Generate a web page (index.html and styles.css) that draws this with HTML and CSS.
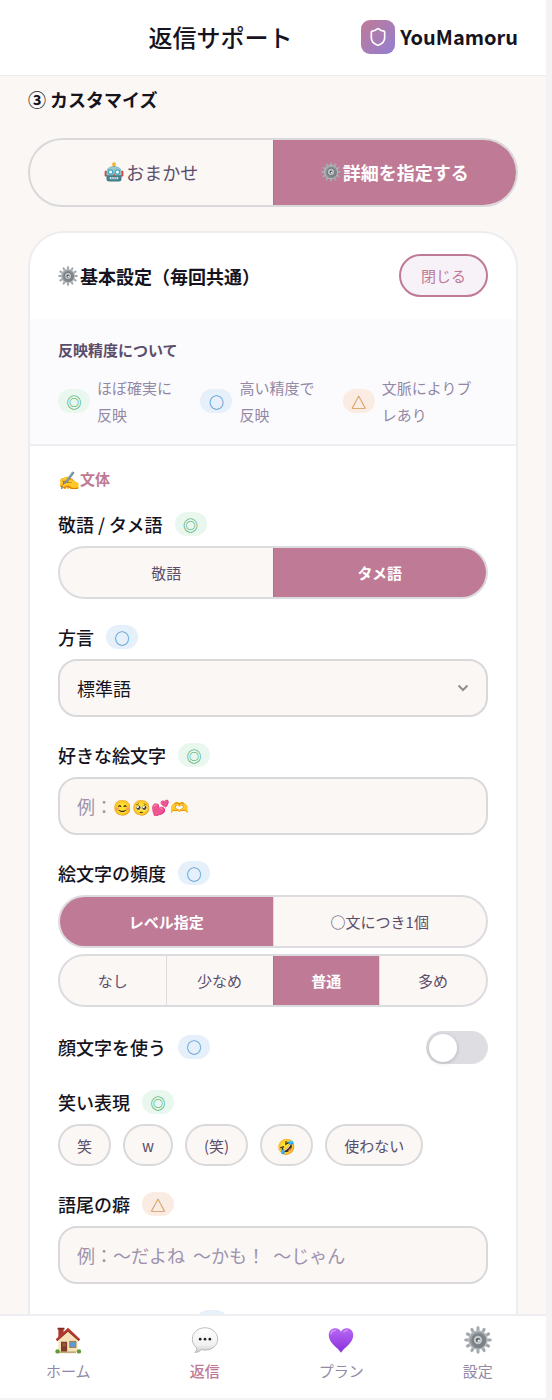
FILE: index.html
```html
<!DOCTYPE html>
<html lang="ja">
<head>
    <meta charset="UTF-8">
    <meta name="viewport" content="width=device-width, initial-scale=1.0">
    <title>返信サポート | YouMamoru</title>
    <link rel="stylesheet" href="styles.css">
</head>
<body>
    <!-- shared icons -->
    <svg class="icon-defs" aria-hidden="true">
        <defs>
            <linearGradient id="steel" x1="0" y1="0" x2="1" y2="1">
                <stop offset="0" stop-color="#a9afb3"/>
                <stop offset="1" stop-color="#6f7479"/>
            </linearGradient>
            <linearGradient id="purple" x1="0" y1="0" x2="0" y2="1">
                <stop offset="0" stop-color="#b768f2"/>
                <stop offset="1" stop-color="#8a2fdc"/>
            </linearGradient>
            <linearGradient id="bubble" x1="0" y1="0" x2="0" y2="1">
                <stop offset="0" stop-color="#ffffff"/>
                <stop offset="0.7" stop-color="#f1f1f1"/>
                <stop offset="1" stop-color="#c9c9c9"/>
            </linearGradient>
            <symbol id="icon-gear" viewBox="0 0 32 32">
                <g stroke="#a3a8ac" stroke-width="3.4" stroke-linecap="round">
                    <path d="M16 2v28M2 16h28"/>
                    <path d="M16 2v28M2 16h28" transform="rotate(30 16 16)"/>
                    <path d="M16 2v28M2 16h28" transform="rotate(60 16 16)"/>
                </g>
                <circle cx="16" cy="16" r="10.500" fill="url(#steel)" stroke="#b9bec1" stroke-width="1.500"/>
                <circle cx="16" cy="16" r="7.500" fill="#7c8186"/>
                <circle cx="16" cy="16" r="4.800" fill="#c3c8cb"/>
                <circle cx="16" cy="16" r="2.400" fill="#4c4f53"/>
                <circle cx="16.800" cy="16.800" r="1.300" fill="#fff"/>
            </symbol>
            <symbol id="icon-robot" viewBox="0 0 32 32">
                <rect x="14.500" y="3" width="3" height="5" fill="#8d6a5c"/>
                <circle cx="16" cy="3.500" r="3" fill="#f3b632"/>
                <rect x="1" y="14" width="4" height="9" rx="1.500" fill="#d8453a"/>
                <rect x="27" y="14" width="4" height="9" rx="1.500" fill="#d8453a"/>
                <path d="M4 17C4 10 9 7 16 7s12 3 12 10v10c0 3-2 4-4 4H8c-2 0-4-1-4-4z" fill="#3f7f8c"/>
                <path d="M4 17C4 10 9 7 16 7s12 3 12 10v4H4z" fill="#9cc7cb"/>
                <circle cx="10.500" cy="16" r="4.500" fill="#3fa9c4"/>
                <circle cx="21.500" cy="16" r="4.500" fill="#3fa9c4"/>
                <circle cx="10.500" cy="16" r="2.400" fill="#fff"/>
                <circle cx="21.500" cy="16" r="2.400" fill="#fff"/>
                <path d="M16 18l2 4h-4z" fill="#d8453a"/>
                <rect x="9" y="24" width="14" height="3.500" rx="1" fill="#d9e3e4"/>
                <path d="M12.500 24v3.500M16 24v3.500M19.500 24v3.500" stroke="#37565e"/>
            </symbol>
            <symbol id="icon-house" viewBox="0 0 32 32">
                <path d="M5 3h6v10H5z" fill="#a8382c"/>
                <path d="M4 2h8v2H4z" fill="#7e2a22"/>
                <path d="M5 14 16 4l11 10v16H5z" fill="#f5e2b8"/>
                <path d="M16 2 2 15l1.500 2L16 6l12.500 11 1.500-2z" fill="#b9372d"/>
                <path d="M3.500 17 16 6l12.500 11" fill="none" stroke="#7e2a22"/>
                <rect x="8" y="18" width="7" height="12" fill="#7a3f26"/>
                <rect x="9.500" y="19.500" width="4" height="4" fill="#9b5a38"/>
                <rect x="18" y="17.500" width="7" height="7" fill="#5c9ad0" stroke="#a8763f"/>
                <path d="M6 30h19" stroke="#c2a878" stroke-width="2"/>
                <circle cx="4" cy="29" r="2.500" fill="#5f9a35"/>
                <circle cx="28.500" cy="29" r="2.500" fill="#5f9a35"/>
            </symbol>
            <symbol id="icon-bubble" viewBox="0 0 32 32">
                <path d="M16 2C8 2 1.500 7.500 1.500 15c0 4.500 2 7.500 5 9.800.2 2.200-.5 3.800-2 5.400 3 0 5.500-1.200 7.500-3.200 1.300.3 2.600.5 4 .5 8 0 14.500-5 14.500-12.500S24 2 16 2z" fill="url(#bubble)" stroke="#b4b4b4"/>
                <circle cx="10.500" cy="15" r="1.500" fill="#222"/>
                <circle cx="16" cy="15" r="1.500" fill="#222"/>
                <circle cx="21.500" cy="15" r="1.500" fill="#222"/>
            </symbol>
            <symbol id="icon-heart" viewBox="0 0 32 32">
                <path d="M16 30.500C13 25 2 19.500 2 10.500 2 5.500 5.500 2.500 9.500 2.500c3 0 5.300 1.500 6.500 4.200 1.200-2.700 3.500-4.200 6.500-4.200 4 0 7.500 3 7.500 8C30 19.500 19 25 16 30.500z" fill="url(#purple)"/>
                <path d="M4.500 9c.5-2.500 2.500-4 5-4M19.500 6.500c1-1 2-1.500 3.500-1.500" fill="none" stroke="#d09bf7" stroke-width="1.500" stroke-linecap="round"/>
            </symbol>
        </defs>
    </svg>

    <div class="app">
        <header class="header">
            <span class="header-spacer"></span>
            <h1>返信サポート</h1>
            <a href="#" class="brand">
                <span class="brand-icon">
                    <svg viewBox="0 0 24 24" width="20" height="20" fill="none" stroke="#fff" stroke-width="2" stroke-linecap="round" stroke-linejoin="round">
                        <path d="M20 13c0 5-3.5 7.5-7.66 8.95a1 1 0 0 1-.67-.01C7.5 20.5 4 18 4 13V6a1 1 0 0 1 1-1c2 0 4.5-1.2 6.24-2.72a1.17 1.17 0 0 1 1.52 0C14.51 3.81 17 5 19 5a1 1 0 0 1 1 1z"/>
                    </svg>
                </span>
                YouMamoru
            </a>
        </header>

        <main class="content">
            <h2 class="step-title">③ カスタマイズ</h2>

            <div class="segment segment-large">
                <button type="button"><svg class="emoji-icon"><use href="#icon-robot"/></svg>おまかせ</button>
                <button type="button" class="active"><svg class="emoji-icon"><use href="#icon-gear"/></svg>詳細を指定する</button>
            </div>

            <section class="card">
                <div class="card-head">
                    <h3><svg class="emoji-icon"><use href="#icon-gear"/></svg>基本設定（毎回共通）</h3>
                    <button type="button" class="close-btn">閉じる</button>
                </div>

                <div class="legend">
                    <h4>反映精度について</h4>
                    <ul>
                        <li><span class="badge badge-high">◎</span><span>ほぼ確実に反映</span></li>
                        <li><span class="badge badge-mid">○</span><span>高い精度で反映</span></li>
                        <li><span class="badge badge-low">△</span><span>文脈によりブレあり</span></li>
                    </ul>
                </div>

                <form class="settings">
                    <h4><span class="emoji">✍️</span>文体</h4>

                    <div class="field">
                        <div class="field-label">敬語 / タメ語 <span class="badge badge-high">◎</span></div>
                        <div class="segment">
                            <button type="button">敬語</button>
                            <button type="button" class="active">タメ語</button>
                        </div>
                    </div>

                    <div class="field">
                        <label class="field-label" for="dialect">方言 <span class="badge badge-mid">○</span></label>
                        <div class="control">
                            <select id="dialect">
                                <option>標準語</option>
                                <option>関西弁</option>
                                <option>博多弁</option>
                            </select>
                            <svg class="chevron" viewBox="0 0 12 12" width="12" height="12" fill="none" stroke="#8e8e93" stroke-width="2"><path d="M1.500 3.500 6 8l4.500-4.500"/></svg>
                        </div>
                    </div>

                    <div class="field">
                        <label class="field-label" for="emojis">好きな絵文字 <span class="badge badge-high">◎</span></label>
                        <div class="control">
                            <input type="text" id="emojis" placeholder=" ">
                            <span class="hint">例：<span class="hint-emoji">😊🥺💕🫶</span></span>
                        </div>
                    </div>

                    <div class="field">
                        <div class="field-label">絵文字の頻度 <span class="badge badge-mid">○</span></div>
                        <div class="segment">
                            <button type="button" class="active">レベル指定</button>
                            <button type="button">○文につき1個</button>
                        </div>
                        <div class="segment">
                            <button type="button">なし</button>
                            <button type="button">少なめ</button>
                            <button type="button" class="active">普通</button>
                            <button type="button">多め</button>
                        </div>
                    </div>

                    <div class="field field-row">
                        <label class="field-label" for="kaomoji">顔文字を使う <span class="badge badge-mid">○</span></label>
                        <input type="checkbox" id="kaomoji" class="toggle">
                    </div>

                    <div class="field">
                        <div class="field-label">笑い表現 <span class="badge badge-high">◎</span></div>
                        <div class="chips">
                            <button type="button">笑</button>
                            <button type="button">w</button>
                            <button type="button">(笑)</button>
                            <button type="button" class="chip-emoji">🤣</button>
                            <button type="button">使わない</button>
                        </div>
                    </div>

                    <div class="field">
                        <label class="field-label" for="ending">語尾の癖 <span class="badge badge-low">△</span></label>
                        <input type="text" id="ending" placeholder="例：〜だよね  〜かも！  〜じゃん">
                    </div>

                    <div class="field">
                        <label class="field-label" for="first-person">一人称・呼び方 <span class="badge badge-mid">○</span></label>
                        <input type="text" id="first-person">
                    </div>
                </form>
            </section>
        </main>

        <nav class="tabbar">
            <a href="#"><svg class="tab-icon"><use href="#icon-house"/></svg>ホーム</a>
            <a href="#" class="active"><svg class="tab-icon"><use href="#icon-bubble"/></svg>返信</a>
            <a href="#"><svg class="tab-icon"><use href="#icon-heart"/></svg>プラン</a>
            <a href="#"><svg class="tab-icon"><use href="#icon-gear"/></svg>設定</a>
        </nav>
    </div>
</body>
</html>
```
FILE: styles.css
```css
* {
    box-sizing: border-box;
    margin: 0;
    padding: 0;
}

body {
    font-family: 'Noto Sans CJK JP', sans-serif;
    background: #f5f2f3;
    color: #15131d;
    padding: 0 6px 2px 0;
}

button, input, select {
    font-family: inherit;
    color: inherit;
}

button {
    cursor: pointer;
}

a {
    color: inherit;
    text-decoration: none;
}

.icon-defs {
    position: absolute;
    width: 0;
    height: 0;
}

.app {
    display: flex;
    flex-direction: column;
    height: calc(100vh - 2px);
    background: #fbf7f4;
}

/* header */
.header {
    display: flex;
    justify-content: space-between;
    align-items: center;
    flex-shrink: 0;
    height: 76px;
    padding: 0 28px 2px;
    background: #fff;
    border-bottom: 1px solid #ececf0;
}

.header-spacer {
    width: 52px;
}

.header h1 {
    font-size: 24px;
    font-weight: 500;
}

.brand {
    display: flex;
    align-items: center;
    gap: 5px;
    font-size: 20px;
    font-weight: 700;
}

.brand-icon {
    display: flex;
    align-items: center;
    justify-content: center;
    width: 34px;
    height: 34px;
    border-radius: 9px;
    background: linear-gradient(135deg, #c07a96, #937fd3);
}

/* content */
.content {
    flex: 1;
    overflow-y: auto;
    scrollbar-width: none;
    padding: 9px 28px 28px;
}

.step-title {
    font-size: 18px;
    line-height: 28px;
    font-weight: 700;
    margin-bottom: 25px;
}

.emoji-icon {
    width: 20px;
    height: 20px;
    margin-right: 2px;
    flex-shrink: 0;
}

.emoji {
    font-size: 18px;
}

.segment {
    display: flex;
    height: 53px;
    border: 2px solid #dcdce0;
    border-radius: 27px;
    background: #fbf7f4;
    overflow: hidden;
}

.segment + .segment {
    margin-top: 6px;
}

.segment button {
    flex: 1;
    display: flex;
    align-items: center;
    justify-content: center;
    border: none;
    background: none;
    font-size: 15px;
    color: #5a4e6b;
}

.segment button + button {
    border-left: 1px solid #dcdce0;
}

.segment .active {
    background: #bf7a96;
    color: #fff;
    font-weight: 700;
}

.segment button + .active {
    border-left-color: #b56f8c;
}

.segment-large {
    height: 69px;
    border-radius: 35px;
    border-color: #d9d9db;
    margin-bottom: 24px;
}

.segment-large button {
    font-size: 18px;
    padding-bottom: 1px;
}

/* settings card */
.card {
    background: #fff;
    border: 2px solid #ededf0;
    border-radius: 36px;
    overflow: hidden;
}

.card-head {
    display: flex;
    justify-content: space-between;
    align-items: center;
    padding: 21px 28px 22px;
}

.card-head h3 {
    display: flex;
    align-items: center;
    font-size: 18px;
    font-weight: 700;
}

.close-btn {
    padding: 6px 20px;
    border: 2px solid #bf7a96;
    border-radius: 22px;
    background: #f7f1f8;
    color: #bf7a96;
    font-size: 15px;
    line-height: 27px;
}

.badge {
    display: flex;
    align-items: center;
    justify-content: center;
    flex-shrink: 0;
    width: 32px;
    height: 24px;
    border-radius: 12px;
    font-size: 15px;
    font-weight: 500;
}

.badge-high {
    background: #eaf7ef;
    color: #35a860;
}

.badge-mid {
    background: #e5f0fb;
    color: #2f7fc0;
}

.badge-low {
    background: #faece2;
    color: #c47a22;
}

.legend {
    padding: 17px 28px 16px;
    background: #fbfbfe;
    border-bottom: 2px solid #ededf2;
}

.legend h4 {
    font-size: 15px;
    line-height: 27px;
    color: #5a4e6b;
    margin-bottom: 11px;
}

.legend ul {
    display: grid;
    grid-template-columns: 28% 28% 31%;
    column-gap: 22px;
    list-style: none;
}

.legend li {
    display: flex;
    align-items: center;
    gap: 7px;
    font-size: 15px;
    line-height: 27px;
    color: #9389a5;
}

.settings {
    padding: 20px 28px 28px;
}

.settings h4 {
    display: flex;
    align-items: center;
    font-size: 15px;
    line-height: 26px;
    color: #bf7a96;
    margin-bottom: 18px;
}

.field {
    margin-bottom: 24px;
}

.field-label {
    display: flex;
    align-items: center;
    gap: 12px;
    height: 30px;
    padding-bottom: 2px;
    margin-bottom: 6px;
    font-size: 18px;
    font-weight: 500;
}

.field-row {
    display: flex;
    align-items: center;
    justify-content: space-between;
}

.field-row .field-label {
    margin-bottom: 0;
}

input[type="text"], select {
    display: block;
    width: 100%;
    height: 58px;
    padding: 0 17px;
    border: 2px solid #d9d9db;
    border-radius: 19px;
    background: #fbf7f4;
    font-size: 18px;
}

input::placeholder {
    color: #9d93ae;
}

.control {
    position: relative;
}

.control select {
    appearance: none;
}

.chevron {
    position: absolute;
    top: 23px;
    right: 19px;
    pointer-events: none;
}

/* placeholder with smaller emoji */
.hint {
    position: absolute;
    inset: 0 19px;
    display: flex;
    align-items: center;
    font-size: 18px;
    color: #9d93ae;
    pointer-events: none;
}

.hint-emoji {
    font-size: 15px;
}

input:not(:placeholder-shown) + .hint {
    display: none;
}

.toggle {
    appearance: none;
    width: 62px;
    height: 33px;
    padding: 3px;
    border-radius: 17px;
    background: #dedde2;
    cursor: pointer;
}

.toggle::before {
    content: '';
    display: block;
    width: 28px;
    height: 28px;
    border-radius: 50%;
    background: #fff;
    box-shadow: 0 1px 4px rgba(0, 0, 0, 0.2);
}

.toggle:checked {
    background: #bf7a96;
}

.toggle:checked::before {
    margin-left: 28px;
}

.chips {
    display: flex;
    flex-wrap: wrap;
    gap: 12px;
}

.chips button {
    height: 42px;
    padding: 0 17px;
    border: 2px solid #d9d9db;
    border-radius: 21px;
    background: #fbf7f4;
    color: #5a4e6b;
    font-size: 15px;
}

.chips .chip-emoji {
    padding: 0 15px;
}

/* bottom tabs */
.tabbar {
    display: flex;
    flex-shrink: 0;
    height: 84px;
    background: #fff;
    border-top: 2px solid #ededf2;
}

.tabbar a {
    flex: 1;
    display: flex;
    flex-direction: column;
    align-items: center;
    padding-top: 10px;
    font-size: 15px;
    line-height: 26px;
    color: #9389a5;
}

.tabbar .active {
    color: #bf7a96;
    font-weight: 500;
}

.tab-icon {
    width: 28px;
    height: 28px;
    margin-bottom: 4px;
}
```
